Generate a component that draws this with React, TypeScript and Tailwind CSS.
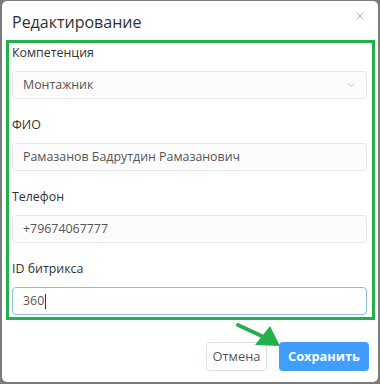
import { X, ChevronDown } from "lucide-react";

const fields = [
  { label: "ФИО", value: "Рамазанов Бадрутдин Рамазанович" },
  { label: "Телефон", value: "+79674067777" },
];

export default function App() {
  return (
    <div
      className="w-[380px] h-[384px] bg-[#7b7b7b] pl-[2px] pt-[1px] pr-[2px] pb-[2px]"
      style={{ fontFamily: '"Open Sans", "Noto Sans", sans-serif' }}
    >
      <div className="relative h-full bg-white rounded-[5px] flex flex-col">
        {/* header */}
        <div className="h-[39px] flex items-start justify-between pl-[10px] pr-[12px] pt-[10px]">
          <h2 className="text-[16px] leading-[22px] text-[#303133]">Редактирование</h2>
          <button className="mt-[-1px] text-[#8f9399]">
            <X className="w-[12px] h-[12px]" strokeWidth={1.4} />
          </button>
        </div>

        {/* highlighted form */}
        <div className="ml-[4px] mr-[3px] border-[3px] border-[#22b14c] pl-[3px] pr-[5px] pt-[1px] pb-[2px] flex flex-col gap-[17px] text-[12.4px]">
          <div>
            <div className="h-[18px] mb-[9px] leading-[18px] text-[#333]">Компетенция</div>
            <div className="h-[28px] rounded-[4px] border border-[#e5e7eb] bg-[#fcfcfc] flex items-center justify-between pl-[10px] pr-[9px]">
              <span className="text-[#555]">Монтажник</span>
              <ChevronDown className="w-[12px] h-[12px] text-[#9a9ea6]" strokeWidth={1.25} />
            </div>
          </div>
          {fields.map((f) => (
            <div key={f.label}>
              <div className="h-[18px] mb-[9px] leading-[18px] text-[#333]">{f.label}</div>
              <div className="h-[28px] rounded-[4px] border border-[#e5e7eb] bg-[#fcfcfc] flex items-center pl-[10px]">
                <span className="text-[#555]">{f.value}</span>
              </div>
            </div>
          ))}
          <div>
            <div className="h-[18px] mb-[9px] leading-[18px] text-[#333]">ID битрикса</div>
            <div className="h-[28px] rounded-[4px] border border-[#8cbde0] bg-white flex items-center pl-[10px]">
              <span className="text-[#555]">360</span>
              <span className="ml-[1px] w-px h-[15px] bg-[#333]" />
            </div>
          </div>
        </div>

        {/* footer */}
        <div className="flex justify-end gap-[12px] pr-[9px] pt-[22px] text-[12.8px]">
          <button className="h-[29px] w-[61px] rounded-[4px] border border-[#dcdfe6] bg-white text-[#555]">
            Отмена
          </button>
          <button className="h-[29px] w-[90px] rounded-[4px] bg-[#409eff] font-bold text-white">
            Сохранить
          </button>
        </div>

        {/* green arrow annotation */}
        <svg className="absolute left-[230px] top-[318px]" width="56" height="32" viewBox="0 0 56 32">
          <line x1="6" y1="6" x2="34" y2="19" stroke="#22b14c" strokeWidth="4" strokeLinecap="round" />
          <polygon points="23,26 48,27 38,7" fill="#22b14c" />
        </svg>
      </div>
    </div>
  );
}
